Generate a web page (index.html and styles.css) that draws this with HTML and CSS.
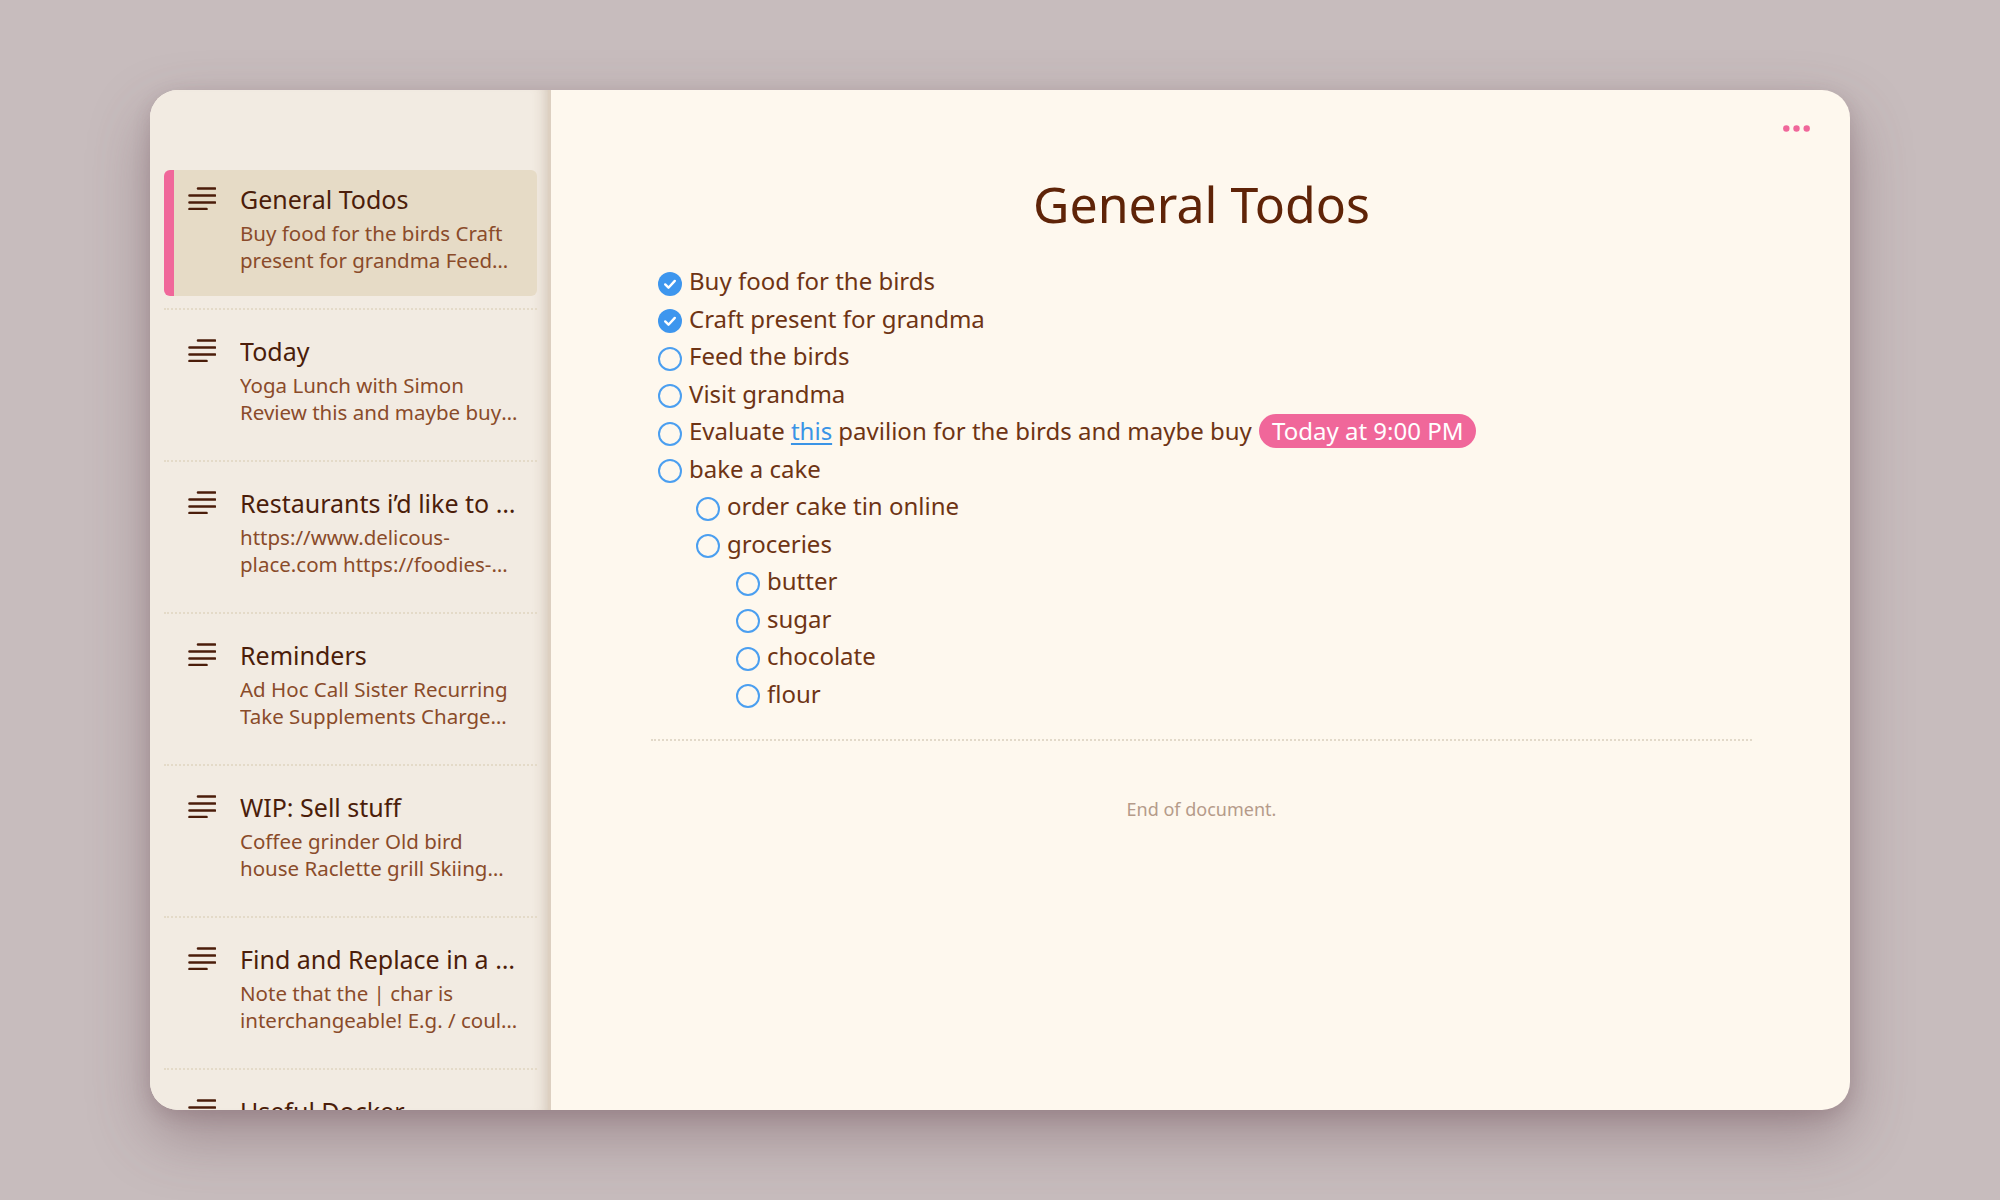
FILE: index.html
```html
<!DOCTYPE html>
<html lang="en">
<head>
<meta charset="utf-8">
<title>General Todos</title>
<link rel="stylesheet" href="styles.css">
</head>
<body>
<div class="window">
  <aside class="sidebar">
    <div class="note selected">
      <svg class="note-icon" width="28" height="24" viewBox="0 0 28 24"><path d="M10 2.5H27M1.5 9.5H27M1.5 16.5H27M1.5 23H18.5" /></svg>
      <div class="note-text">
        <div class="note-title">General Todos</div>
        <div class="note-preview">Buy food for the birds Craft present for grandma Feed the birds Visit grandma</div>
      </div>
    </div>
    <div class="sep"></div>
    <div class="note">
      <svg class="note-icon" width="28" height="24" viewBox="0 0 28 24"><path d="M10 2.5H27M1.5 9.5H27M1.5 16.5H27M1.5 23H18.5" /></svg>
      <div class="note-text">
        <div class="note-title">Today</div>
        <div class="note-preview">Yoga Lunch with Simon Review this and maybe buy some more things</div>
      </div>
    </div>
    <div class="sep"></div>
    <div class="note">
      <svg class="note-icon" width="28" height="24" viewBox="0 0 28 24"><path d="M10 2.5H27M1.5 9.5H27M1.5 16.5H27M1.5 23H18.5" /></svg>
      <div class="note-text">
        <div class="note-title">Restaurants i’d like to visit</div>
        <div class="note-preview">https://www.delicous-place.com https://foodies-corner.com</div>
      </div>
    </div>
    <div class="sep"></div>
    <div class="note">
      <svg class="note-icon" width="28" height="24" viewBox="0 0 28 24"><path d="M10 2.5H27M1.5 9.5H27M1.5 16.5H27M1.5 23H18.5" /></svg>
      <div class="note-text">
        <div class="note-title">Reminders</div>
        <div class="note-preview">Ad Hoc Call Sister Recurring Take Supplements Charge phone</div>
      </div>
    </div>
    <div class="sep"></div>
    <div class="note">
      <svg class="note-icon" width="28" height="24" viewBox="0 0 28 24"><path d="M10 2.5H27M1.5 9.5H27M1.5 16.5H27M1.5 23H18.5" /></svg>
      <div class="note-text">
        <div class="note-title">WIP: Sell stuff</div>
        <div class="note-preview">Coffee grinder Old bird house Raclette grill Skiing boots</div>
      </div>
    </div>
    <div class="sep"></div>
    <div class="note">
      <svg class="note-icon" width="28" height="24" viewBox="0 0 28 24"><path d="M10 2.5H27M1.5 9.5H27M1.5 16.5H27M1.5 23H18.5" /></svg>
      <div class="note-text">
        <div class="note-title">Find and Replace in a file</div>
        <div class="note-preview">Note that the | char is interchangeable! E.g. / could be used</div>
      </div>
    </div>
    <div class="sep"></div>
    <div class="note">
      <svg class="note-icon" width="28" height="24" viewBox="0 0 28 24"><path d="M10 2.5H27M1.5 9.5H27M1.5 16.5H27M1.5 23H18.5" /></svg>
      <div class="note-text">
        <div class="note-title">Useful Docker</div>
        <div class="note-preview">docker ps docker images</div>
      </div>
    </div>
  </aside>
  <main class="main">
    <button class="more" aria-label="More">
      <svg width="27" height="7" viewBox="0 0 27 7"><circle cx="3.3" cy="3.5" r="3.2"/><circle cx="13.5" cy="3.5" r="3.2"/><circle cx="23.7" cy="3.5" r="3.2"/></svg>
    </button>
    <h1 class="doc-title">General Todos</h1>
    <ul class="todos">
      <li class="todo done"><span class="box"><svg width="24" height="24" viewBox="0 0 24 24"><circle cx="12" cy="12" r="12" class="fill"/><path d="M7.2 12.4l3.3 3.3 6.3-6.8" class="check"/></svg></span><span>Buy food for the birds</span></li>
      <li class="todo done"><span class="box"><svg width="24" height="24" viewBox="0 0 24 24"><circle cx="12" cy="12" r="12" class="fill"/><path d="M7.2 12.4l3.3 3.3 6.3-6.8" class="check"/></svg></span><span>Craft present for grandma</span></li>
      <li class="todo"><span class="box"><svg width="24" height="24" viewBox="0 0 24 24"><circle cx="12" cy="12" r="11" class="ring"/></svg></span><span>Feed the birds</span></li>
      <li class="todo"><span class="box"><svg width="24" height="24" viewBox="0 0 24 24"><circle cx="12" cy="12" r="11" class="ring"/></svg></span><span>Visit grandma</span></li>
      <li class="todo"><span class="box"><svg width="24" height="24" viewBox="0 0 24 24"><circle cx="12" cy="12" r="11" class="ring"/></svg></span><span>Evaluate <a class="link" href="#">this</a> pavilion for the birds and maybe buy <span class="badge">Today at 9:00 PM</span></span></li>
      <li class="todo-group">
        <div class="todo"><span class="box"><svg width="24" height="24" viewBox="0 0 24 24"><circle cx="12" cy="12" r="11" class="ring"/></svg></span><span>bake a cake</span></div>
        <ul class="todos nested">
          <li class="todo"><span class="box"><svg width="24" height="24" viewBox="0 0 24 24"><circle cx="12" cy="12" r="11" class="ring"/></svg></span><span>order cake tin online</span></li>
          <li class="todo-group">
            <div class="todo"><span class="box"><svg width="24" height="24" viewBox="0 0 24 24"><circle cx="12" cy="12" r="11" class="ring"/></svg></span><span>groceries</span></div>
            <ul class="todos nested deep">
              <li class="todo"><span class="box"><svg width="24" height="24" viewBox="0 0 24 24"><circle cx="12" cy="12" r="11" class="ring"/></svg></span><span>butter</span></li>
              <li class="todo"><span class="box"><svg width="24" height="24" viewBox="0 0 24 24"><circle cx="12" cy="12" r="11" class="ring"/></svg></span><span>sugar</span></li>
              <li class="todo"><span class="box"><svg width="24" height="24" viewBox="0 0 24 24"><circle cx="12" cy="12" r="11" class="ring"/></svg></span><span>chocolate</span></li>
              <li class="todo"><span class="box"><svg width="24" height="24" viewBox="0 0 24 24"><circle cx="12" cy="12" r="11" class="ring"/></svg></span><span>flour</span></li>
            </ul>
          </li>
        </ul>
      </li>
    </ul>
    <div class="end-sep"></div>
    <p class="end">End of document.</p>
  </main>
</div>
</body>
</html>
```

FILE: styles.css
```css
* { box-sizing: border-box; }

html, body {
  margin: 0;
  padding: 0;
}

body {
  width: 2000px;
  height: 1200px;
  background: #c7bcbd;
  font-family: "Noto Sans", "Open Sans", sans-serif;
  display: flex;
  align-items: center;
  justify-content: center;
  overflow: hidden;
}

.window {
  width: 1700px;
  height: 1020px;
  display: flex;
  border-radius: 28px;
  overflow: hidden;
  background: #fef8ee;
  box-shadow: 0 26px 60px rgba(96, 62, 74, 0.38), 0 6px 18px rgba(96, 62, 74, 0.18);
}

/* Sidebar */
.sidebar {
  width: 401px;
  flex: none;
  background: #f2ebe2;
  padding: 80px 11px 0 14px;
  border-right: 3px solid #ddd0c1;
  box-shadow: inset -14px 0 14px -12px rgba(120, 90, 60, 0.28);
  overflow: hidden;
}

.note {
  display: flex;
  height: 126px;
  padding: 12px 10px 0 14px;
  border-left: 10px solid transparent;
  border-radius: 6px;
}

.note.selected {
  background: #e6dbc6;
  border-left-color: #f0679a;
}

.note-icon {
  flex: none;
  margin-top: 4px;
  margin-right: 24px;
  fill: none;
  stroke: #4b1d0a;
  stroke-width: 2.6;
  stroke-linecap: round;
}

.note-text {
  flex: 1;
  min-width: 0;
}

.note-title {
  font-size: 25px;
  line-height: 34px;
  color: #4b1d0a;
  white-space: nowrap;
  overflow: hidden;
  text-overflow: ellipsis;
}

.note-preview {
  margin-top: 4px;
  max-width: 280px;
  font-size: 20.5px;
  line-height: 27px;
  color: #8a4b2a;
  display: -webkit-box;
  -webkit-line-clamp: 2;
  -webkit-box-orient: vertical;
  overflow: hidden;
}

.sep {
  margin: 12px 0 12px;
  border-top: 2px dotted #e4dac8;
}

/* Main */
.main {
  flex: 1;
  position: relative;
  padding: 80px 98px 0 100px;
  color: #6e3414;
}

.more {
  position: absolute;
  top: 35px;
  right: 40px;
  padding: 0;
  border: 0;
  background: none;
  line-height: 0;
  fill: #f0679a;
}

.doc-title {
  margin: 0;
  font-size: 50px;
  line-height: 68px;
  font-weight: 400;
  text-align: center;
  color: #5f2408;
}

.todos {
  list-style: none;
  margin: 24px 0 0;
  padding: 0 0 0 7px;
  font-size: 24px;
  line-height: 37.5px;
}

.todos.nested {
  margin: 0;
  padding-left: 38px;
}

.todos.nested.deep {
  padding-left: 40px;
}

.todo {
  display: flex;
  align-items: flex-start;
}

.box {
  flex: none;
  width: 24px;
  height: 24px;
  margin-top: 9.5px;
  margin-right: 7px;
  line-height: 0;
}

.box .fill { fill: #3d96ee; }
.box .check {
  fill: none;
  stroke: #ffffff;
  stroke-width: 2.4;
  stroke-linecap: round;
  stroke-linejoin: round;
}
.box .ring {
  fill: none;
  stroke: #4b9ff0;
  stroke-width: 2;
}

.link {
  color: #3a94e6;
  text-decoration: underline;
  text-underline-offset: 3px;
}

.badge {
  display: inline-block;
  margin-left: 1px;
  padding: 0 13px;
  line-height: 34px;
  border-radius: 17px;
  background: #f0679a;
  color: #ffffff;
}

.end-sep {
  margin-top: 27px;
  border-top: 2px dotted #e2d9c9;
}

.end {
  margin: 56px 0 0;
  text-align: center;
  font-size: 18px;
  line-height: 24px;
  color: #b59b8a;
}
```
